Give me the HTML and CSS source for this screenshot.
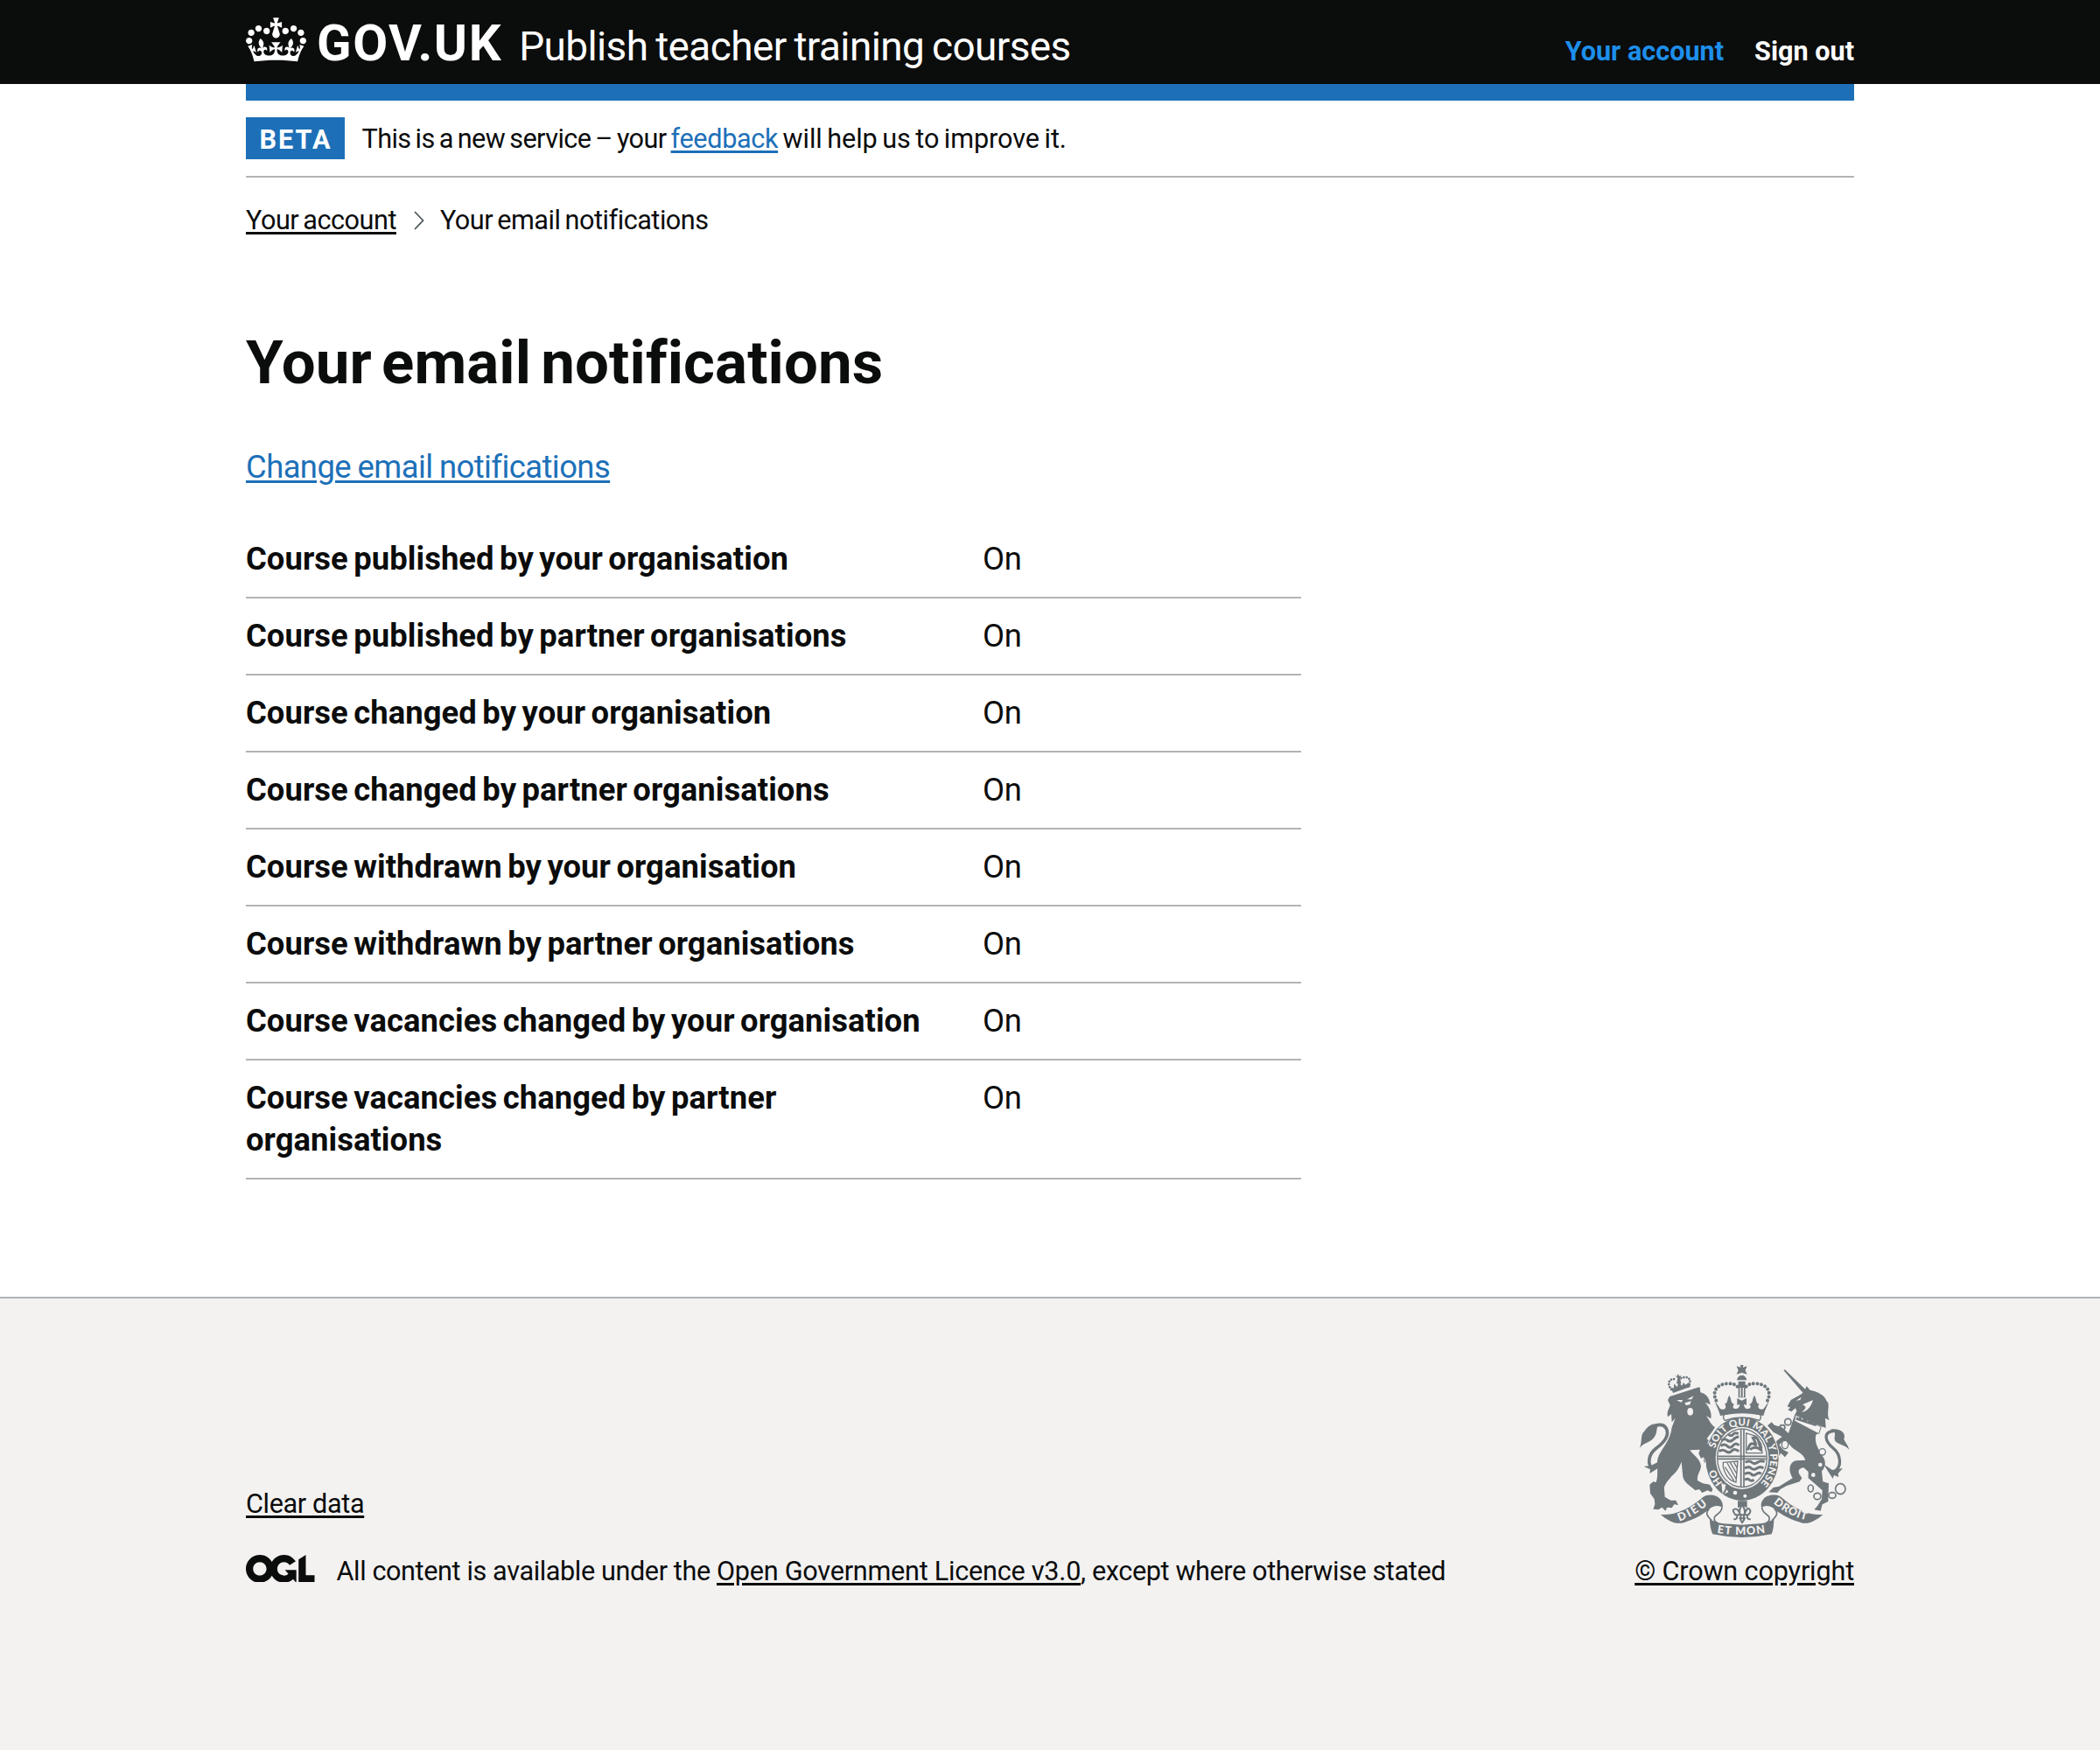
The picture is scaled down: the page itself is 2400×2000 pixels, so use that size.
FILE: index.html
```
<!DOCTYPE html>
<html lang="en">
<head>
<meta charset="utf-8">
<title>Your email notifications</title>
<link rel="stylesheet" href="styles.css">
</head>
<body>
<header class="header">
  <div class="container header-inner">
    <svg class="crown" viewBox="0 0 132 97" fill="currentColor" aria-hidden="true"><path fill-rule="evenodd" d="M25 30.2c3.5 1.5 7.7-.2 9.1-3.7 1.5-3.6-.2-7.8-3.9-9.2-3.6-1.4-7.6.3-9.1 3.9-1.4 3.5.3 7.5 3.9 9zM9 39.5c3.6 1.5 7.8-.2 9.2-3.7 1.5-3.6-.2-7.8-3.9-9.1-3.6-1.5-7.6.2-9.1 3.8-1.4 3.5.3 7.5 3.8 9zM4.4 57.2c3.5 1.5 7.7-.2 9.1-3.8 1.5-3.6-.2-7.7-3.9-9.1-3.5-1.5-7.6.3-9.1 3.8-1.4 3.5.3 7.6 3.9 9.1zm38.3-21.4c3.5 1.5 7.7-.2 9.1-3.8 1.5-3.6-.2-7.7-3.9-9.1-3.6-1.5-7.6.3-9.1 3.8-1.3 3.6.4 7.7 3.9 9.1zm64.4-5.6c-3.6 1.5-7.8-.2-9.1-3.7-1.5-3.6.2-7.8 3.8-9.2 3.6-1.4 7.7.3 9.2 3.9 1.3 3.5-.4 7.5-3.9 9zm15.9 9.3c-3.6 1.5-7.7-.2-9.1-3.7-1.5-3.6.2-7.8 3.7-9.1 3.6-1.5 7.7.2 9.2 3.8 1.5 3.5-.3 7.5-3.8 9zm4.7 17.7c-3.6 1.5-7.8-.2-9.2-3.8-1.5-3.6.2-7.7 3.9-9.1 3.6-1.5 7.7.3 9.2 3.8 1.3 3.5-.4 7.6-3.9 9.1zM89.3 35.8c-3.6 1.5-7.8-.2-9.2-3.8-1.4-3.6.2-7.7 3.9-9.1 3.6-1.5 7.7.3 9.2 3.8 1.4 3.6-.3 7.7-3.9 9.1zM69.7 17.7l8.9 4.7V9.3l-8.9 2.8c-.2-.3-.5-.6-.9-.9L72.4 0H59.6l3.5 11.2c-.3.3-.6.5-.9.9l-8.8-2.8v13.1l8.8-4.7c.3.3.6.7.9.9l-5 15.4v.1c-.2.8-.4 1.6-.4 2.4 0 4.1 3.1 7.5 7 8.1h.2c.3 0 .7.1 1 .1.4 0 .7 0 1-.1h.2c4-.6 7.1-4.1 7.1-8.1 0-.8-.1-1.7-.4-2.4V34l-5.1-15.4c.4-.2.7-.6 1-.9zM66 92.8c16.9 0 32.8 1.1 47.1 3.2 4-16.9 8.9-26.7 14-33.5l-9.6-3.4c1 4.9 1.1 7.2 0 10.2-1.5-1.4-3-4.3-4.2-8.7L108.6 76c2.8-2 5-3.2 7.5-3.3-4.4 9.4-10 11.9-13.6 11.2-4.3-.8-6.3-4.6-5.6-7.9 1-4.7 5.7-5.9 8-.5 4.3-8.7-3-11.4-7.6-8.8 7.1-7.2 7.9-13.5 2.1-21.1-8 6.1-8.1 12.3-4.5 20.8-4.7-5.4-12.1-2.5-9.5 6.2 3.4-5.2 7.9-2 7.2 3.1-.6 4.3-6.4 7.8-13.5 7.2-10.3-.9-10.9-8-11.2-13.8 2.5-.5 7.1 1.8 11 7.3L80.2 60c-4.1 4.4-8 5.3-12.3 5.4 1.4-4.4 8-11.6 8-11.6H55.5s6.4 7.2 7.9 11.6c-4.2-.1-8-1-12.3-5.4l1.4 16.4c3.9-5.5 8.5-7.7 10.9-7.3-.3 5.8-.9 12.8-11.1 13.8-7.2.6-12.9-2.9-13.5-7.2-.7-5 3.8-8.3 7.1-3.1 2.7-8.7-4.6-11.6-9.4-6.2 3.7-8.5 3.6-14.7-4.6-20.8-5.8 7.6-5 13.9 2.2 21.1-4.7-2.6-11.9.1-7.7 8.8 2.3-5.5 7.1-4.2 8.1.5.7 3.3-1.3 7.1-5.7 7.9-3.5.7-9-1.8-13.5-11.2 2.5.1 4.7 1.3 7.5 3.3l-4.7-15.4c-1.2 4.4-2.7 7.2-4.3 8.7-1.1-3-.9-5.3 0-10.2l-9.5 3.4c5 6.9 9.9 16.7 14 33.5 14.8-2.1 30.8-3.2 47.7-3.2z"/></svg>
    <span class="logotype">GOV.UK</span>
    <span class="product">Publish teacher training courses</span>
    <nav class="nav">
      <a class="nav-link nav-active">Your account</a>
      <a class="nav-link">Sign out</a>
    </nav>
  </div>
</header>

<div class="container">
  <div class="bar"></div>
  <div class="phase">
    <strong class="tag">BETA</strong>
    <span class="phase-text">This is a new service – your <a class="link">feedback</a><span class="phase-end"> will help us to improve it.</span></span>
  </div>
  <nav class="crumbs">
    <a class="crumb-link">Your account</a>
    <svg class="chevron" viewBox="0 0 12 22" fill="none" stroke="#505a5f" stroke-width="1.8"><path d="M1 1 10.5 11 1 21"/></svg>
    <span>Your email notifications</span>
  </nav>
  <main>
    <h1 class="title">Your email notifications</h1>
    <p class="change"><a class="link">Change email notifications</a></p>
    <dl class="summary">
      <div class="row"><dt>Course published by your organisation</dt><dd>On</dd></div>
      <div class="row"><dt>Course published by partner organisations</dt><dd>On</dd></div>
      <div class="row"><dt>Course changed by your organisation</dt><dd>On</dd></div>
      <div class="row"><dt>Course changed by partner organisations</dt><dd>On</dd></div>
      <div class="row"><dt>Course withdrawn by your organisation</dt><dd>On</dd></div>
      <div class="row"><dt>Course withdrawn by partner organisations</dt><dd>On</dd></div>
      <div class="row"><dt>Course vacancies changed by your organisation</dt><dd>On</dd></div>
      <div class="row"><dt>Course vacancies changed by partner organisations</dt><dd>On</dd></div>
    </dl>
  </main>
</div>

<footer class="footer">
  <div class="container footer-inner">
    <div class="footer-meta">
      <a class="foot-link clear">Clear data</a>
      <div class="licence">
        <svg class="ogl" viewBox="0 0 483.2 195.7" fill="currentColor" aria-hidden="true"><path d="M421.5 142.8V.1l-50.7 32.3v161.1h112.4v-50.7zm-122.3-9.6A47.12 47.12 0 0 1 221 97.8c0-26 21.1-47.1 47.1-47.1 16.7 0 31.4 8.7 39.7 21.8l42.7-27.2A97.63 97.63 0 0 0 268.1 0c-36.5 0-68.3 20.1-85.1 49.7A98 98 0 0 0 97.8 0C43.9 0 0 43.9 0 97.8s43.9 97.8 97.8 97.8c36.5 0 68.3-20.1 85.1-49.7a97.76 97.76 0 0 0 149.6 25.4l19.4 22.2h3v-87.8h-80l24.3 27.5zM97.8 145c-26 0-47.1-21.1-47.1-47.1s21.1-47.1 47.1-47.1 47.1 21.1 47.1 47.1S123.8 145 97.8 145"/></svg>
        <span class="licence-text">All content is available under the <a class="foot-link licence-link">Open Government Licence v3.0</a>, except where otherwise stated</span>
      </div>
    </div>
    <div class="copyright">
      <svg class="crest" viewBox="42 30 720 592" aria-hidden="true">
        <defs>
          <path id="garter-left" d="M326 434A97 113 0 0 1 297 368"/>
          <path id="garter" d="M300 317A97 113 0 1 1 453 439"/>
          <path id="dieu" d="M178 566Q232 548 284 500"/>
          <path id="etmon" d="M307 605Q392 620 482 603"/>
          <path id="droit" d="M500 504Q556 552 626 565"/>
        </defs>
        <g class="ink">
          <!-- lion -->
          <path d="M138 150 145 138 238 108 248 106 250 124C268 128 280 140 284 166L266 158C282 176 290 196 286 214L270 204C282 220 284 232 300 244L288 262 272 282C290 300 300 318 296 345L302 372 288 374 284 364 276 374 262 362 262 346 252 350 244 334 248 320 214 322C224 338 250 352 252 378C250 396 238 404 240 426L258 436 282 440 292 456 288 466 274 460 256 468 246 456 232 460C212 440 196 436 190 414L185 362C176 384 168 398 152 410C136 430 124 442 126 456L128 482 148 494 166 494 174 510 160 508 152 520 136 518 130 530 118 518 106 526 88 524 94 508 92 490 78 470 76 440 88 430 98 432C108 404 98 370 104 350C112 322 148 290 152 244L164 212 152 226 150 198 138 208C134 190 142 180 146 168Z"/>
          <path class="line" stroke-width="11" d="M90 386C64 374 72 336 98 316C130 292 146 270 132 246C122 230 96 232 82 250"/>
          <path d="M106 232C74 228 66 248 52 264C46 274 50 290 42 314C60 294 84 294 94 274C102 262 98 250 106 232ZM56 378 82 374 114 358 104 384 76 402 78 388Z"/>
          <!-- lion's crown -->
          <g class="line" stroke-width="8" stroke-dasharray=".1 9.5" stroke-linecap="round"><path d="M150 114C132 92 146 72 168 80M207 104C222 88 214 62 182 76"/></g>
          <path d="M148 106 158 110 160 94 170 106 176 86 186 102 192 90 198 98 210 90 216 104 156 126ZM162 64 170 70 172 60 178 68 186 66 180 74 184 94 168 94 172 76Z"/>

          <!-- unicorn -->
          <path d="M535 48 540 46 610 114 600 124ZM598 128 612 108 614 102 626 116C654 122 676 134 682 152L688 160C692 184 682 194 692 220L678 212 680 246 664 240 578 202 570 208 580 188 576 178 562 190 550 184 558 176 548 172 560 150 586 136Z"/>
          <path d="M572 206 660 258 646 270C640 300 656 318 668 342C680 356 682 376 666 394L670 430 690 436 688 498 668 508 662 530 640 526 652 512 666 490 668 460 646 440 620 418 620 396 604 382C590 384 584 390 588 402L598 418 590 430 546 444 524 456 514 468 484 466 500 450 520 446 566 418C550 392 554 364 578 358L610 356C602 330 572 324 560 308L548 294 536 288 520 304 534 320 552 330 540 346 526 332 520 342 508 324 496 318 504 296 530 276 500 260 480 238 494 226 504 236 530 244 552 264 560 240Z"/>
          <path class="line" stroke-width="10" d="M704 398C742 380 728 334 706 316C676 292 668 256 712 256"/>
          <path d="M696 250C736 246 750 266 742 284C748 298 756 304 760 320C742 300 722 304 712 290C706 278 716 268 708 258ZM672 370 702 390 738 384 722 402 724 414 708 408 704 420Z"/>
          <g class="line" stroke-width="5">
            <ellipse cx="730" cy="455" rx="17" ry="18"/><ellipse cx="702" cy="477" rx="12" ry="10"/>
            <ellipse cx="651" cy="480" rx="12" ry="11"/><ellipse cx="628" cy="453" rx="9" ry="12"/>
            <ellipse cx="550" cy="225" rx="11" ry="11"/><ellipse cx="531" cy="244" rx="9" ry="8"/>
          </g>
          <g class="chain">
            <ellipse cx="637" cy="407" rx="9" ry="9"/><ellipse cx="661" cy="372" rx="9" ry="9"/>
            <ellipse cx="668" cy="328" rx="11" ry="11"/><ellipse cx="540" cy="303" rx="11" ry="14"/>
          </g>

          <!-- garter and shield -->
          <ellipse cx="393" cy="352" rx="128" ry="146" class="paper"/>
          <ellipse cx="393" cy="352" rx="125" ry="143"/>
          <ellipse cx="393" cy="349" rx="91" ry="107" class="paper"/>
          <ellipse cx="393" cy="349" rx="87" ry="102"/>
          <ellipse cx="393" cy="349" rx="83" ry="98" class="paper"/>
          <g class="line" stroke-width="9">
            <path d="M322 290q10-10 20-2t20-2 20-10M320 308q12-10 22 0t20-2 20 0M314 326q12-8 24 0t20-2 24 2M346 268q10 8 16 0t18-2"/>
            <path d="M404 364q14-8 22 0t20 0 24-2M402 384q14-8 22 0t20 0 22 0M402 404q14-8 22 0t18 0 16 0M402 424q10-6 16 0t16 0"/>
            <path d="M412 322q8-30 22-20t-4-22q16-6 20 14t12 22M420 320q20-16 40 4"/>
          </g>
          <path class="line" stroke-width="4" d="M407 264V332H462L458 300 440 274ZM328 364 378 360 372 432Q340 426 328 380ZM342 366 372 420M352 364 374 402M334 380 366 428M364 362 376 384"/>
          <path class="line" stroke-width="5" d="M389 252V450M399 252V450M310 343H476M310 352H476"/>
          <path class="paper" d="M322 436 346 430 334 448 346 466 326 474Z"/>
          <path class="line" stroke-width="6" d="M326 436Q346 434 340 450T328 472"/>
          <circle class="paper" cx="369" cy="468" r="7"/><circle class="paper" cx="403" cy="479" r="6"/>
        </g>
        <g class="motto motto-small">
          <text><textPath href="#garter" textLength="390">SOIT QUI MAL Y PENSE</textPath></text>
          <text><textPath href="#garter-left">HO</textPath></text>
        </g>
        <g class="ink">
          <!-- lion's paw over the garter -->
          <path d="M258 284C278 300 290 316 292 334L300 352 294 374 286 364 274 376 264 348 250 330Z"/>
          <!-- main crown -->
          <path d="M374 34 392 40 410 34 404 48 410 62 392 56 374 62 380 48ZM388 32H396V66H388ZM386 28H398L395 40H389ZM386 68H398L395 56H389Z"/>
          <path d="M375 82Q378 66 392 66T409 82ZM380 86H404V142H380Z"/>
          <path class="paper" d="M385 108h4v32h-4ZM395 108h4v32h-4Z"/>
          <path class="line" stroke-width="12" stroke-dasharray=".1 13.5" stroke-linecap="round" d="M304 152C286 116 314 92 348 94C364 94 374 98 378 106M480 152C498 116 470 92 436 94C420 94 410 98 406 106"/>
          <path d="M300 158C316 168 312 182 326 182C338 184 340 168 332 164C346 160 340 148 349 134C358 148 352 160 366 164C358 172 362 182 374 180C382 178 386 168 384 164L376 168V144L392 152 408 144V168L400 164C398 172 404 182 414 180C424 178 424 172 418 164C432 160 426 148 435 134C444 148 438 160 452 164C444 172 450 182 460 182C472 182 470 168 484 158C478 172 472 182 466 204Q392 190 318 204C312 182 306 172 300 158Z"/>
          <path class="paper" stroke="#6f777b" stroke-width="4" d="M332 200Q392 188 454 200Q462 208 452 220Q392 200 334 220Q324 208 332 200Z"/>

          <!-- fleur-de-lis pendant -->
          <path d="M378 496H410V520L394 512 378 520Z"/>
          <path class="line" stroke-width="6" d="M393 510Q378 530 388 546V562L393 570 399 562V546Q408 530 393 510ZM386 544Q380 522 368 524T370 544H414Q426 532 418 524T400 544M382 556H405M376 546Q376 562 364 558M410 546Q410 562 422 558"/>

          <!-- ribbon -->
          <path d="M114 543C166 546 216 520 260 482C276 472 306 474 318 490C326 500 328 510 326 520C312 508 292 514 280 524C250 550 214 564 186 572C160 576 136 562 114 543Z"/>
          <path d="M670 543C618 546 568 520 526 482C510 472 478 474 466 490C458 500 456 510 460 520C472 508 492 514 504 524C534 550 570 564 600 572C624 576 648 562 670 543Z"/>
          <path class="line" stroke-width="5" d="M324 518C322 540 304 540 298 552C296 564 300 570 310 572M280 524C266 536 272 548 288 562M461 518C462 540 480 540 486 552C488 564 484 570 474 572M504 524C518 536 512 548 496 562"/>
          <path d="M282 556C300 576 340 574 392 578C444 574 484 576 502 556C502 580 500 596 494 610Q392 632 292 610C286 596 282 580 282 556Z"/>
          <!-- faces and collar -->
          <path class="paper" d="M168 150 190 150 184 158ZM204 148 226 136 220 148ZM196 160l22-6-4 12-14 2ZM578 152 596 140 592 150ZM600 166 636 150C628 180 610 190 596 192 612 182 616 172 600 166Z"/>
          <ellipse class="paper" cx="215" cy="190" rx="10" ry="13"/>
          <path class="paper" stroke="#6f777b" stroke-width="3" d="M577 202 664 242 656 266 572 222Z"/>
          <path d="M578 218l2-10 8 4 4-8 6 14 10-8 4-4 4 18 12-6 4-6 4 20 10-6 4-4-4 18Z"/>
        </g>
        <g class="motto">
          <text><textPath href="#dieu" textLength="112">DIEU</textPath></text>
          <text><textPath href="#etmon" textLength="166">ET MON</textPath></text>
          <text><textPath href="#droit" textLength="128">DROIT</textPath></text>
        </g>
      </svg>
      <a class="foot-link">© Crown copyright</a>
    </div>
  </div>
</footer>
</body>
</html>
```
FILE: styles.css
```
body {
  margin: 0;
  min-height: 2000px;
  display: flex;
  flex-direction: column;
  background: #fff;
  color: #0b0c0c;
  font-family: Roboto, "Liberation Sans", sans-serif;
  font-size: 30.6px;
  line-height: 38px;
  letter-spacing: -0.35px;
}
.container { width: 1838px; margin: 0 auto; }

.header { background: #0b0c0c; color: #fff; }
.header-inner {
  display: flex;
  align-items: baseline;
  height: 82px;
  padding-top: 14px;
}
.crown { width: 69px; height: 51px; align-self: flex-start; margin-top: 6px; }
.logotype {
  margin-left: 12px;
  font-size: 58px;
  font-weight: 700;
  line-height: 70px;
  letter-spacing: 1.6px;
}
.product {
  margin-left: 19px;
  font-size: 45.9px;
  letter-spacing: -0.58px;
  word-spacing: -2px;
}
.nav { display: flex; gap: 35px; margin-left: auto; }
.nav-link { font-weight: 700; letter-spacing: 0; }
.nav-active { color: #1d8feb; }

.bar { height: 19px; background: #1d70b8; }
.phase {
  display: flex;
  padding: 19px 0;
  border-bottom: 2px solid #b1b4b6;
}
.tag {
  width: 113px;
  height: 48px;
  line-height: 51px;
  background: #1d70b8;
  color: #fff;
  text-align: center;
  letter-spacing: 2px;
  text-indent: 1px;
}
.phase-text {
  height: 48px;
  margin-left: 19.5px;
  line-height: 49px;
  letter-spacing: -0.57px;
  word-spacing: -2px;
}
.phase-text .link { letter-spacing: -0.35px; }
.phase-end { letter-spacing: -0.06px; }
.link, .crumb-link, .foot-link {
  text-decoration: underline;
  text-decoration-thickness: 2.5px;
  text-underline-offset: 3px;
}
.link { color: #1d70b8; }

.crumbs {
  display: flex;
  margin-top: 30px;
  letter-spacing: -0.47px;
  word-spacing: -2px;
}
.chevron { width: 12px; height: 22px; margin: 8px 18px 0 20px; }

.title {
  margin: 105px 0 0;
  font-size: 69px;
  line-height: 77px;
  letter-spacing: 0.1px;
  word-spacing: -6px;
}
.change {
  margin: 57px 0 0;
  font-size: 36.4px;
  line-height: 48px;
  letter-spacing: -0.55px;
  word-spacing: -1px;
}
.summary {
  width: 1206px;
  margin: 37.8px 0 0;
  font-size: 36.4px;
  line-height: 47.85px;
  letter-spacing: -0.2px;
}
.row {
  display: flex;
  padding: 19.1px 0;
  border-bottom: 2px solid #b1b4b6;
}
.row dt {
  width: 805px;
  margin-right: 37px;
  font-weight: 700;
  letter-spacing: 0.06px;
  word-spacing: -2.6px;
}
.row dd { margin: 0; }

.footer {
  flex: 1;
  margin-top: 134.5px;
  border-top: 2px solid #b1b4b6;
  background: #f3f2f1;
}
.footer-inner {
  display: flex;
  justify-content: space-between;
  align-items: flex-end;
  padding-top: 75.5px;
}
.footer-meta { display: flex; flex-direction: column; align-items: flex-start; gap: 39px; }
.licence { display: flex; }
.licence-text { letter-spacing: -0.38px; }
.licence-link { letter-spacing: -0.24px; }
.ogl { width: 78.5px; height: 31.8px; margin-right: 25px; }
.copyright { display: flex; flex-direction: column; align-items: flex-end; letter-spacing: -0.15px; }
.crest { width: 240px; height: 197.3px; margin: 0 5px 19.5px 0; }
.ink { fill: #6f777b; }
.ink .line { fill: none; stroke: #6f777b; }
.ink .chain { fill: #f3f2f1; stroke: #6f777b; stroke-width: 4px; }
.ink .paper { fill: #f3f2f1; }
.motto {
  fill: #f3f2f1;
  font-family: Lato, sans-serif;
  font-size: 38px;
  font-weight: 900;
  letter-spacing: 0;
}
.motto-small { font-size: 34px; }
```
